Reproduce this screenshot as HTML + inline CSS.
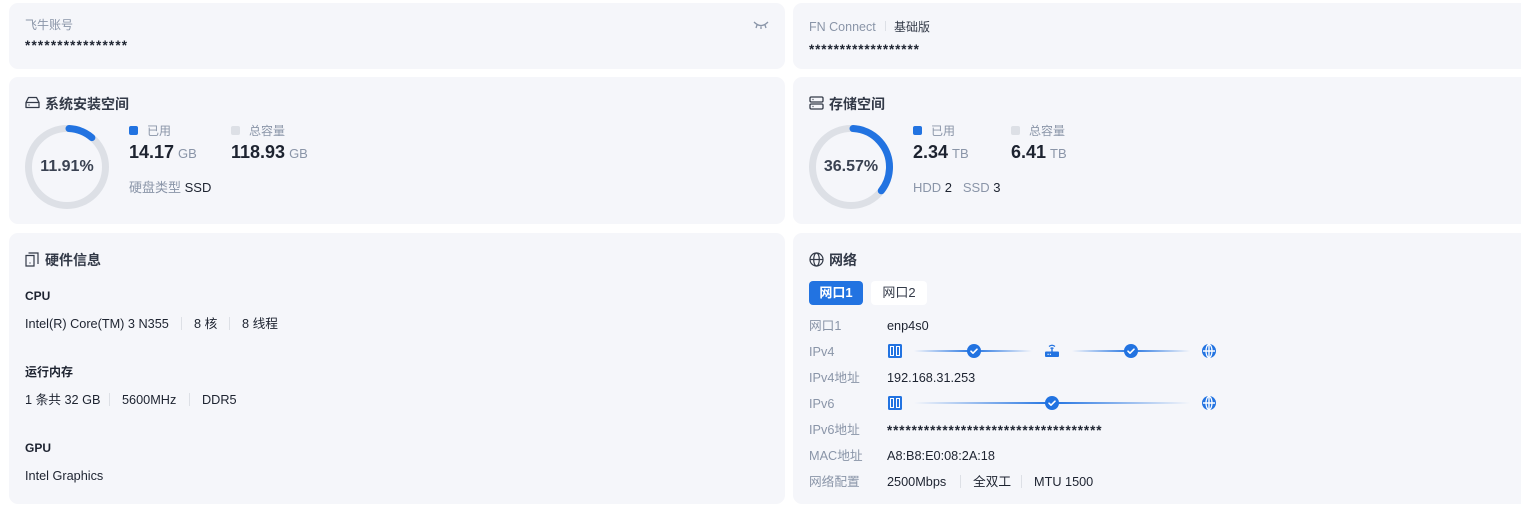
<!DOCTYPE html>
<html><head><meta charset="utf-8">
<style>
*{margin:0;padding:0;box-sizing:border-box}
body{width:1521px;height:518px;background:#fff;font-family:"Liberation Sans","Noto Sans CJK SC",sans-serif;position:relative;overflow:hidden;color:#1d2330}
.card{position:absolute;background:#f5f6fa;border-radius:9px}
.t{position:absolute;white-space:nowrap;font-size:12.7px;line-height:16px}
.g{color:#8a95a8}
.h{font-size:14px;font-weight:bold;color:#333a48;line-height:18px}
.b{font-weight:bold}
.st{font-size:13.5px;letter-spacing:1.1px;line-height:16px;font-weight:bold}
.sep{position:absolute;width:1px;height:13px;background:#dde0e6}
.big{font-size:18px;font-weight:bold;color:#1d2330;line-height:22px}
.big small{font-size:13px;font-weight:normal;color:#8a95a8;margin-left:4px}
.sq{position:absolute;width:9px;height:9px;border-radius:2px}
.line{position:absolute;height:2px}
</style></head><body>
<div class="card" style="left:9px;top:3px;width:776px;height:66px"></div>
<div class="card" style="left:793px;top:3px;width:740px;height:66px"></div>
<div class="card" style="left:9px;top:77px;width:776px;height:147px"></div>
<div class="card" style="left:793px;top:77px;width:740px;height:147px"></div>
<div class="card" style="left:9px;top:233px;width:776px;height:271px"></div>
<div class="card" style="left:793px;top:233px;width:740px;height:271px"></div>

<div class="t g" style="left:25px;top:17px;font-size:12px">飞牛账号</div>
<div class="t st" style="left:25px;top:38px;letter-spacing:1.2px">****************</div>
<svg style="position:absolute;left:753px;top:20px" width="16" height="10" viewBox="0 0 16 10"><path d="M1 2 Q8 9 15 2 M4 5 L3 8 M8 6.5 L8 9 M12 5 L13 8" stroke="#8a95a8" stroke-width="1.3" fill="none"/></svg>

<div class="t g" style="left:809px;top:19px;font-size:12.5px">FN Connect</div>
<div class="sep" style="left:885px;top:21px;height:10px"></div>
<div class="t" style="left:894px;top:19px;font-size:12px;color:#333a48">基础版</div>
<div class="t st" style="left:809px;top:42px;letter-spacing:0.9px">******************</div>

<!-- system space -->
<svg style="position:absolute;left:25px;top:96px" width="15" height="13" viewBox="0 0 15 13"><path d="M3.5 1.5h8l2.5 5v5h-13v-5z M1 6.5h13 M3.5 9h1" stroke="#333a48" stroke-width="1.3" fill="none" stroke-linejoin="round"/></svg>
<div class="t h" style="left:45px;top:95px">系统安装空间</div>
<svg style="position:absolute;left:25px;top:125px" width="84" height="84"><circle cx="42" cy="42" r="38.5" fill="none" stroke="#dde0e6" stroke-width="7"/><circle cx="42" cy="42" r="38.5" fill="none" stroke="#2273e1" stroke-width="7" stroke-linecap="round" stroke-dasharray="25 300" transform="rotate(-87 42 42)"/></svg>
<div class="t" style="left:25px;top:158px;width:84px;text-align:center;font-size:16px;line-height:18px;font-weight:bold;color:#3a4252">11.91%</div>
<div class="sq" style="left:129px;top:126px;background:#2273e1"></div>
<div class="t g" style="left:147px;top:123px;font-size:12px">已用</div>
<div class="t big" style="left:129px;top:141px">14.17<small>GB</small></div>
<div class="sq" style="left:231px;top:126px;background:#dde0e6"></div>
<div class="t g" style="left:249px;top:123px;font-size:12px">总容量</div>
<div class="t big" style="left:231px;top:141px">118.93<small>GB</small></div>
<div class="t" style="left:129px;top:180px;font-size:13px"><span class="g">硬盘类型</span> SSD</div>

<!-- storage -->
<svg style="position:absolute;left:809px;top:96px" width="15" height="14" viewBox="0 0 15 14"><rect x="1" y="1" width="13" height="5" rx="1.2" stroke="#333a48" stroke-width="1.3" fill="none"/><rect x="1" y="8" width="13" height="5" rx="1.2" stroke="#333a48" stroke-width="1.3" fill="none"/><path d="M3.5 3.5h1M3.5 10.5h1" stroke="#333a48" stroke-width="1.3"/></svg>
<div class="t h" style="left:829px;top:95px">存储空间</div>
<svg style="position:absolute;left:809px;top:125px" width="84" height="84"><circle cx="42" cy="42" r="38.5" fill="none" stroke="#dde0e6" stroke-width="7"/><circle cx="42" cy="42" r="38.5" fill="none" stroke="#2273e1" stroke-width="7" stroke-linecap="round" stroke-dasharray="84 300" transform="rotate(-87 42 42)"/></svg>
<div class="t" style="left:809px;top:158px;width:84px;text-align:center;font-size:16px;line-height:18px;font-weight:bold;color:#3a4252">36.57%</div>
<div class="sq" style="left:913px;top:126px;background:#2273e1"></div>
<div class="t g" style="left:931px;top:123px;font-size:12px">已用</div>
<div class="t big" style="left:913px;top:141px">2.34<small>TB</small></div>
<div class="sq" style="left:1011px;top:126px;background:#dde0e6"></div>
<div class="t g" style="left:1029px;top:123px;font-size:12px">总容量</div>
<div class="t big" style="left:1011px;top:141px">6.41<small>TB</small></div>
<div class="t" style="left:913px;top:180px;font-size:13px"><span class="g">HDD</span> 2 &nbsp;&nbsp;<span class="g">SSD</span> 3</div>

<!-- hardware -->
<svg style="position:absolute;left:25px;top:252px" width="14" height="15" viewBox="0 0 14 15"><path d="M1 3.5h8v10.5h-8z M3.5 1h9.5v11" stroke="#333a48" stroke-width="1.2" fill="none"/><path d="M4.5 11h1" stroke="#333a48" stroke-width="1.3"/></svg>
<div class="t h" style="left:45px;top:251px">硬件信息</div>
<div class="t b" style="left:25px;top:288px;font-size:12px">CPU</div>
<div class="t" style="left:25px;top:316px">Intel(R) Core(TM) 3 N355</div>
<div class="sep" style="left:181px;top:317px"></div>
<div class="t" style="left:194px;top:316px">8 核</div>
<div class="sep" style="left:229px;top:317px"></div>
<div class="t" style="left:242px;top:316px">8 线程</div>
<div class="t b" style="left:25px;top:364px;font-size:12px">运行内存</div>
<div class="t" style="left:25px;top:392px">1 条共 32 GB</div>
<div class="sep" style="left:109px;top:393px"></div>
<div class="t" style="left:122px;top:392px">5600MHz</div>
<div class="sep" style="left:189px;top:393px"></div>
<div class="t" style="left:202px;top:392px">DDR5</div>
<div class="t b" style="left:25px;top:440px;font-size:12px">GPU</div>
<div class="t" style="left:25px;top:468px">Intel Graphics</div>

<!-- network -->
<svg style="position:absolute;left:809px;top:252px" width="15" height="15" viewBox="0 0 15 15"><circle cx="7.5" cy="7.5" r="6.5" stroke="#333a48" stroke-width="1.2" fill="none"/><ellipse cx="7.5" cy="7.5" rx="2.8" ry="6.5" stroke="#333a48" stroke-width="1.2" fill="none"/><path d="M1 7.5h13" stroke="#333a48" stroke-width="1.2"/></svg>
<div class="t h" style="left:829px;top:251px">网络</div>
<div style="position:absolute;left:809px;top:281px;width:54px;height:24px;background:#2273e1;border-radius:4px;color:#fff;font-size:13px;font-weight:bold;text-align:center;line-height:24px">网口1</div>
<div style="position:absolute;left:871px;top:281px;width:56px;height:24px;background:#fff;border-radius:4px;color:#333a48;font-size:13px;text-align:center;line-height:24px">网口2</div>

<div class="t g" style="left:809px;top:318px">网口1</div><div class="t" style="left:887px;top:318px">enp4s0</div>
<div class="t g" style="left:809px;top:344px">IPv4</div>
<div class="t g" style="left:809px;top:370px">IPv4地址</div><div class="t" style="left:887px;top:370px">192.168.31.253</div>
<div class="t g" style="left:809px;top:396px">IPv6</div>
<div class="t g" style="left:809px;top:422px">IPv6地址</div><div class="t st" style="left:887px;top:423px;letter-spacing:0.9px">***********************************</div>
<div class="t g" style="left:809px;top:448px">MAC地址</div><div class="t" style="left:887px;top:448px">A8:B8:E0:08:2A:18</div>
<div class="t g" style="left:809px;top:474px">网络配置</div><div class="t" style="left:887px;top:474px">2500Mbps</div>
<div class="sep" style="left:960px;top:475px"></div><div class="t" style="left:973px;top:474px">全双工</div>
<div class="sep" style="left:1021px;top:475px"></div><div class="t" style="left:1034px;top:474px">MTU 1500</div>

<!-- topology lines -->
<div class="line" style="left:914px;top:350px;width:60px;background:linear-gradient(90deg,rgba(34,115,225,0),#2273e1)"></div>
<div class="line" style="left:974px;top:350px;width:58px;background:linear-gradient(90deg,#2273e1,rgba(34,115,225,0))"></div>
<div class="line" style="left:1072px;top:350px;width:59px;background:linear-gradient(90deg,rgba(34,115,225,0),#2273e1)"></div>
<div class="line" style="left:1131px;top:350px;width:59px;background:linear-gradient(90deg,#2273e1,rgba(34,115,225,0))"></div>
<div class="line" style="left:914px;top:402px;width:138px;background:linear-gradient(90deg,rgba(34,115,225,0),#2273e1)"></div>
<div class="line" style="left:1052px;top:402px;width:138px;background:linear-gradient(90deg,#2273e1,rgba(34,115,225,0))"></div>

<svg width="0" height="0" style="position:absolute"><defs>
<g id="chk"><circle cx="7" cy="7" r="7" fill="#2273e1"/><path d="M4 7.2l2 2 4-4" stroke="#fff" stroke-width="1.6" fill="none" stroke-linecap="round" stroke-linejoin="round"/></g>
<g id="srv"><rect x="0" y="0" width="14" height="14" rx="1.5" fill="#2273e1"/><rect x="2" y="2" width="4" height="10" fill="#fff"/><rect x="8" y="2" width="4" height="10" fill="#fff"/><rect x="3" y="3" width="2" height="8" fill="#2273e1"/><rect x="9" y="3" width="2" height="8" fill="#2273e1"/></g>
<g id="glb"><circle cx="7" cy="7" r="7" fill="#2273e1"/><path d="M1 7h12 M7 0.5v13" stroke="#fff" stroke-width="1.4"/><ellipse cx="7" cy="7" rx="3" ry="6.5" stroke="#fff" stroke-width="1.3" fill="none"/></g>
</defs></svg>
<svg style="position:absolute;left:888px;top:344px" width="14" height="14"><use href="#srv"/></svg>
<svg style="position:absolute;left:967px;top:344px" width="14" height="14"><use href="#chk"/></svg>
<svg style="position:absolute;left:1044px;top:342px" width="16" height="16" viewBox="0 0 16 16"><path d="M5 4.5 Q8 2 11 4.5 M6.5 6.5 Q8 5.3 9.5 6.5" stroke="#2273e1" stroke-width="1.2" fill="none"/><rect x="7.3" y="6.5" width="1.4" height="3" fill="#2273e1"/><rect x="1" y="9.5" width="14" height="5.5" rx="1" fill="#2273e1"/><path d="M3.5 12.3h1.2M5.8 12.3h1.2" stroke="#fff" stroke-width="1.1"/></svg>
<svg style="position:absolute;left:1124px;top:344px" width="14" height="14"><use href="#chk"/></svg>
<svg style="position:absolute;left:1202px;top:344px" width="14" height="14"><use href="#glb"/></svg>
<svg style="position:absolute;left:888px;top:396px" width="14" height="14"><use href="#srv"/></svg>
<svg style="position:absolute;left:1045px;top:396px" width="14" height="14"><use href="#chk"/></svg>
<svg style="position:absolute;left:1202px;top:396px" width="14" height="14"><use href="#glb"/></svg>
</body></html>
